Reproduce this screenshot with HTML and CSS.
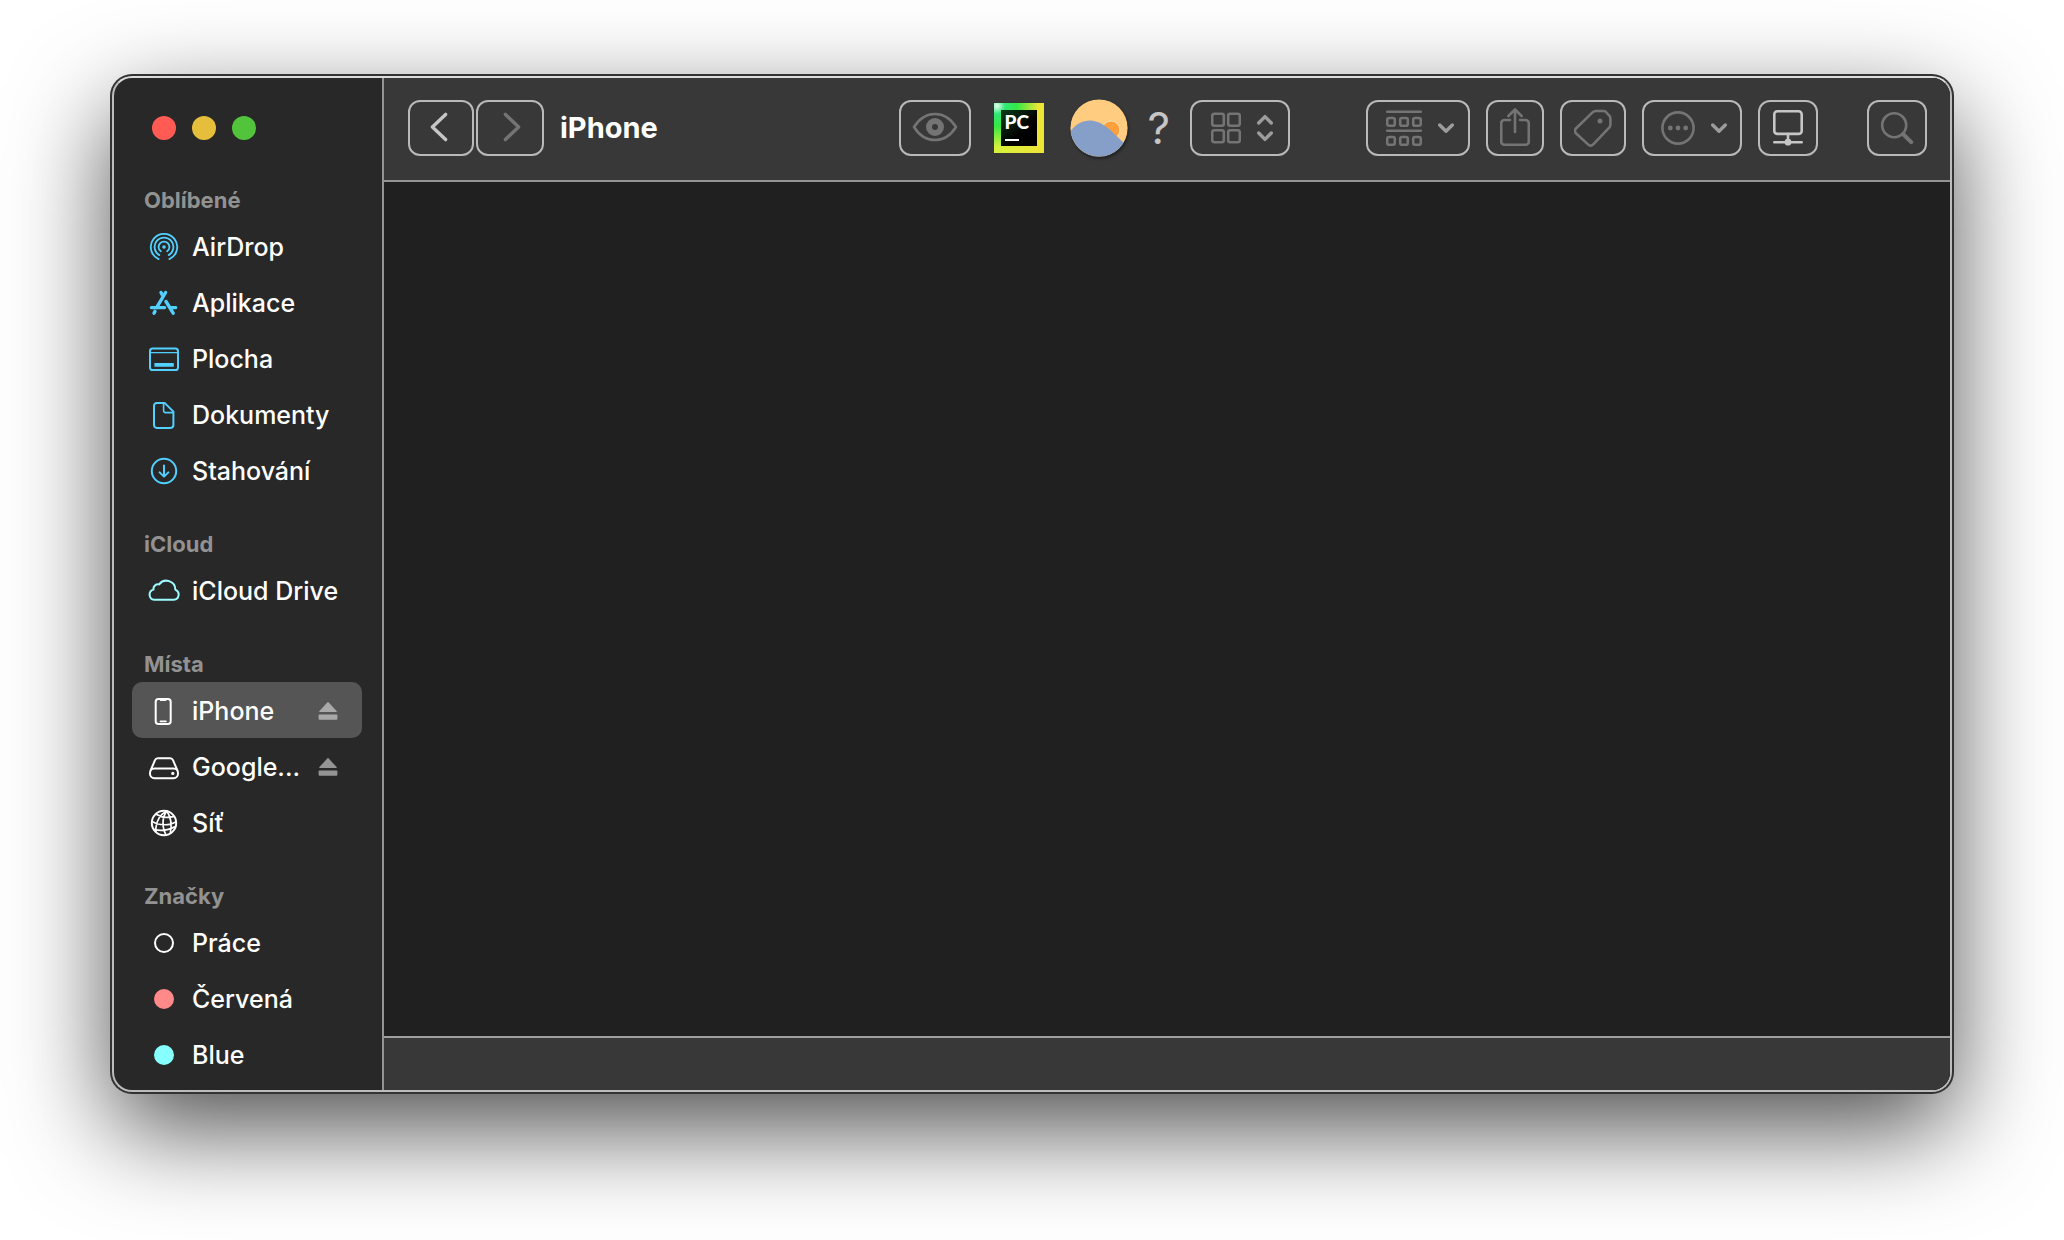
FILE: index.html
```html
<!DOCTYPE html>
<html lang="cs">
<head>
  <meta charset="UTF-8" />
  <meta name="viewport" content="width=device-width, initial-scale=1.0"/>
  <title>iPhone</title>
  <link rel="stylesheet" href="styles.css">
</head>
<body>
  <div class="window">
    <!-- SIDEBAR -->
    <aside class="sidebar">
      <div class="lights">
        <button class="light red" aria-label="Zavřít"></button>
        <button class="light yellow" aria-label="Minimalizovat"></button>
        <button class="light green" aria-label="Zvětšit"></button>
      </div>

      <nav>
        <h2>Oblíbené</h2>
        <a href="#" class="item">
          <svg class="icon blue" viewBox="0 0 32 32"><path stroke-width="1.8" d="M10.6 28.1a13.2 13.2 0 1 1 10.8 0M11.3 24.1a9.4 9.4 0 1 1 9.4 0M12.8 20.3a5.4 5.4 0 1 1 6.4 0"/><circle class="fill" cx="16" cy="16" r="1.8"/></svg>
          <span>AirDrop</span>
        </a>
        <a href="#" class="item">
          <svg class="icon blue apps-icon" viewBox="0 0 32 32"><path d="M17.6 5.5L8.6 20.6M7 24.4l-1 1.8M3.4 20.6h13.2M22.6 20.6h5.1"/><path d="M13 5.5l2 3.6M18 14.5l7.2 11.7"/></svg>
          <span>Aplikace</span>
        </a>
        <a href="#" class="item">
          <svg class="icon blue" viewBox="0 0 32 32"><rect x="2" y="5.6" width="28" height="21.4" rx="2.6"/><path stroke-width="1.4" d="M2 9.6h28"/><rect class="fill" x="6.4" y="20" width="19.4" height="3.8" rx="0.6"/></svg>
          <span>Plocha</span>
        </a>
        <a href="#" class="item">
          <svg class="icon blue" viewBox="0 0 32 32"><path d="M16.6 3.9H8.8a2.8 2.8 0 0 0-2.8 2.8v19.4a2.8 2.8 0 0 0 2.8 2.8h13.8a2.8 2.8 0 0 0 2.8-2.8V12.6z"/><path stroke-width="1.6" d="M15.6 4v7.6a2 2 0 0 0 2 2h7.6"/></svg>
          <span>Dokumenty</span>
        </a>
        <a href="#" class="item">
          <svg class="icon blue" viewBox="0 0 32 32"><circle cx="16" cy="16" r="12.2"/><path d="M16 10.4v11M11.6 17.4l4.4 4.2 4.4-4.2"/></svg>
          <span>Stahování</span>
        </a>

        <h2>iCloud</h2>
        <a href="#" class="item">
          <svg class="icon cyan" viewBox="0 0 32 32"><path d="M6.2 24.8h19.6a5.3 5.3 0 0 0 1.5-10.2A8.9 8.9 0 0 0 11.2 9.4a4.6 4.6 0 0 0-5.7 5.2A5.2 5.2 0 0 0 6.2 24.8z"/></svg>
          <span>iCloud Drive</span>
        </a>

        <h2>Místa</h2>
        <a href="#" class="item selected">
          <svg class="icon" viewBox="0 0 32 32"><rect x="7.7" y="4" width="15" height="25" rx="2.8"/><path d="M12.6 5.2h5.2M12.4 26.4h5.6" stroke-width="1.6"/></svg>
          <span>iPhone</span>
          <svg class="eject" viewBox="0 0 20 20"><path d="M10 .8l8.6 9.2a.6.6 0 0 1-.5 1H1.9a.6.6 0 0 1-.5-1z"/><rect x=".6" y="13.6" width="18.8" height="5.2" rx="1"/></svg>
        </a>
        <a href="#" class="item">
          <svg class="icon" viewBox="0 0 32 32"><path d="M2.6 19.4L7 9.2a3 3 0 0 1 2.8-1.9h12.4A3 3 0 0 1 25 9.2l4.4 10.2"/><rect x="2" y="17.6" width="28" height="9.6" rx="4.4"/><circle class="fill" cx="24.8" cy="22.4" r="1.6"/></svg>
          <span>Google...</span>
          <svg class="eject" viewBox="0 0 20 20"><path d="M10 .8l8.6 9.2a.6.6 0 0 1-.5 1H1.9a.6.6 0 0 1-.5-1z"/><rect x=".6" y="13.6" width="18.8" height="5.2" rx="1"/></svg>
        </a>
        <a href="#" class="item">
          <svg class="icon" viewBox="0 0 32 32"><circle cx="16" cy="16" r="12.2"/><path stroke-width="1.7" d="M19 4.2C12.6 6.6 7.6 14 7.8 24.6M19 4.2C14 9.6 13.8 20.4 18 27.8M19 4.2c3.8 5.8 5 13 3.4 21.4M8.2 7.2c5 3 12 4 17.8 2.2M4 14.4c6.6 4.2 17.6 4.6 24 .4M6 22.6c6.6 1.4 14.6.8 20.6-2.8"/></svg>
          <span>Síť</span>
        </a>

        <h2>Značky</h2>
        <a href="#" class="item">
          <i class="tag"></i>
          <span>Práce</span>
        </a>
        <a href="#" class="item">
          <i class="tag tag-red"></i>
          <span>Červená</span>
        </a>
        <a href="#" class="item">
          <i class="tag tag-blue"></i>
          <span>Blue</span>
        </a>
      </nav>
    </aside>

    <!-- MAIN -->
    <main class="main">
      <header class="toolbar">
        <div class="group history">
          <button class="tool back bright" aria-label="Zpět">
            <svg width="20" height="30" viewBox="0 0 20 30"><path d="M16.6 2.4L3.4 15l13.2 12.6"/></svg>
          </button>
          <button class="tool forward" aria-label="Vpřed">
            <svg width="20" height="30" viewBox="0 0 20 30"><path d="M3.4 2.4L16.6 15 3.4 27.6"/></svg>
          </button>
        </div>
        <h1>iPhone</h1>

        <div class="group apps">
          <button class="tool eye" aria-label="Rychlý náhled">
            <svg width="46" height="32" viewBox="0 0 46 32"><path d="M2 16C7 8 14.5 3 23 3s16 5 21 13c-5 8-12.5 13-21 13S7 24 2 16z"/><circle cx="23" cy="16" r="6" stroke-width="6"/></svg>
          </button>
          <button class="pycharm" aria-label="PyCharm"><span>PC</span></button>
          <button class="plain" aria-label="Pozadí">
            <svg class="picture" width="58" height="58" viewBox="0 0 58 58">
              <defs><clipPath id="disc"><circle cx="29" cy="29" r="28.6"/></clipPath></defs>
              <g clip-path="url(#disc)">
                <rect width="58" height="58" fill="#ffcc80"/>
                <circle cx="41" cy="31" r="9" fill="#ffa03c" stroke="#ffe0b2" stroke-width="1"/>
                <path d="M0 33C9 20 22 19 32 25s14 12 26 23v10H0z" fill="#869fc9"/>
              </g>
            </svg>
          </button>
          <button class="plain help">?</button>
          <button class="tool menu view" aria-label="Zobrazení">
            <svg width="30" height="32" viewBox="0 0 30 32"><rect x="1.2" y="1.8" width="11.6" height="12" rx="2"/><rect x="17.2" y="1.8" width="11.6" height="12" rx="2"/><rect x="1.2" y="18.2" width="11.6" height="12" rx="2"/><rect x="17.2" y="18.2" width="11.6" height="12" rx="2"/></svg>
            <svg class="chevron" width="16" height="28" viewBox="0 0 16 28"><path d="M1.7 9L8 2.6 14.3 9M1.7 19L8 25.4l6.3-6.4"/></svg>
          </button>
        </div>

        <div class="group actions">
          <button class="tool menu arrange" aria-label="Seskupit">
            <svg width="36" height="36" viewBox="0 0 36 36"><path d="M1.2 1.7h33.6M1.2 20.7h33.6"/><rect x="1.2" y="8" width="7.6" height="7.8" rx="1.8"/><rect x="14.2" y="8" width="7.6" height="7.8" rx="1.8"/><rect x="27.2" y="8" width="7.6" height="7.8" rx="1.8"/><rect x="1.2" y="27" width="7.6" height="7.8" rx="1.8"/><rect x="14.2" y="27" width="7.6" height="7.8" rx="1.8"/><rect x="27.2" y="27" width="7.6" height="7.8" rx="1.8"/></svg>
            <svg class="chevron" width="16" height="10" viewBox="0 0 16 10"><path d="M1.7 2L8 8.2 14.3 2"/></svg>
          </button>
          <button class="tool share" aria-label="Sdílet">
            <svg width="30" height="38" viewBox="0 0 30 38"><path d="M10 12H4.5A3.3 3.3 0 0 0 1.2 15.3v18.2a3.3 3.3 0 0 0 3.3 3.3h21a3.3 3.3 0 0 0 3.3-3.3V15.3A3.3 3.3 0 0 0 25.5 12H20M15 24V1.6M8.4 8L15 1.5 21.6 8"/></svg>
          </button>
          <button class="tool label" aria-label="Značky">
            <svg width="38" height="38" viewBox="0 0 38 38"><path d="M21.5 2h8.2a3 3 0 0 1 2.3 1l3.6 4.2a3 3 0 0 1 .8 2v6.6a4 4 0 0 1-1.2 2.8L19 35.6a3.3 3.3 0 0 1-4.7 0L1.9 24.2a3.3 3.3 0 0 1 0-4.7L18.8 3.1A4 4 0 0 1 21.5 2z"/><circle class="fill" cx="26" cy="12" r="2.5"/></svg>
          </button>
          <button class="tool menu more" aria-label="Akce">
            <svg width="34" height="34" viewBox="0 0 34 34"><circle cx="17" cy="17" r="15.6"/><g class="fill"><circle cx="9.3" cy="17" r="2.4"/><circle cx="17" cy="17" r="2.4"/><circle cx="24.7" cy="17" r="2.4"/></g></svg>
            <svg class="chevron" width="16" height="10" viewBox="0 0 16 10"><path d="M1.7 2L8 8.2 14.3 2"/></svg>
          </button>
          <button class="tool server bright" aria-label="Připojit k serveru">
            <svg width="30" height="36" viewBox="0 0 30 36"><rect x="1.3" y="1.3" width="27.4" height="22.6" rx="3"/><path d="M15 24v8M1.3 32.2h27.4"/><circle class="fill" cx="15" cy="32.2" r="3.4"/></svg>
          </button>
        </div>

        <button class="tool search" aria-label="Hledat">
          <svg width="34" height="34" viewBox="0 0 34 34"><circle cx="14.2" cy="14.2" r="12"/><path class="handle" d="M23 23l8.2 8.2"/></svg>
        </button>
      </header>
      <section class="content"></section>
      <footer class="statusbar"></footer>
    </main>
  </div>
</body>
</html>
```
FILE: styles.css
```css
* {
  box-sizing: border-box;
}
body {
  font-family: Inter, "Liberation Sans", sans-serif;
  background-color: #ffffff;
  margin: 0;
  padding: 76px 112px 148px;
  min-height: 100vh;
  display: flex;
  color: #ffffff;
}
button {
  font-family: inherit;
  background: none;
  border: none;
  padding: 0;
  cursor: pointer;
}
svg {
  display: block;
  flex: none;
  fill: none;
  stroke: currentColor;
  stroke-width: 2;
  stroke-linecap: round;
  stroke-linejoin: round;
}
.fill {
  fill: currentColor;
  stroke: none;
}

.window {
  flex: 1;
  display: flex;
  overflow: hidden;
  border: 2px solid #bcbcbc;
  border-top-color: #dcdcdc;
  border-radius: 20px;
  background-color: #282828;
  box-shadow: 0 0 0 2px #333333, 0 36px 100px rgba(0,0,0,0.7);
}

/* sidebar */
.sidebar {
  flex: none;
  width: 270px;
  padding: 38px 20px 0 18px;
  border-right: 2px solid #949494;
}
.lights {
  display: flex;
  gap: 16px;
  padding: 0 20px 40px;
}
.light {
  width: 24px;
  height: 24px;
  border-radius: 50%;
}
.red    { background-color: #ff5b54; }
.yellow { background-color: #e5bf3c; }
.green  { background-color: #51c43b; }

h2 {
  margin: 26px 0 0;
  padding: 2px 0 0 12px;
  font-size: 22px;
  font-weight: 700;
  line-height: 36px;
  color: #929292;
}
h2:first-child {
  margin-top: 0;
}
.item {
  display: flex;
  align-items: center;
  gap: 12px;
  height: 56px;
  padding: 2px 24px 0 16px;
  border-radius: 10px;
  font-size: 25px;
  font-weight: 500;
  color: #ffffff;
  text-decoration: none;
}
.item span {
  flex: 1;
  white-space: nowrap;
}
.selected {
  background-color: #555555;
}
.icon {
  width: 32px;
  height: 32px;
}
.apps-icon {
  stroke-width: 3.4;
}
.blue { color: #52d0ff; }
.cyan { color: #9cfcff; }
.eject {
  width: 20px;
  height: 20px;
  fill: #949494;
  stroke: none;
}
.selected .eject {
  fill: #a9a9a9;
}
.tag {
  width: 20px;
  height: 20px;
  margin: 0 6px;
  border: 2px solid #ffffff;
  border-radius: 50%;
}
.tag-red {
  background-color: #ff8a89;
  border-color: #ff8a89;
}
.tag-blue {
  background-color: #88ffff;
  border-color: #88ffff;
}

/* main */
.main {
  flex: 1;
  display: flex;
  flex-direction: column;
  background-color: #202020;
}
.toolbar {
  display: flex;
  align-items: center;
  padding: 21px 23px 23px 24px;
  background-color: #383838;
  border-bottom: 2px solid #949494;
}
h1 {
  flex: 1;
  margin: 0 0 0 16px;
  font-size: 29px;
  font-weight: 700;
  line-height: 56px;
}
.group {
  display: flex;
  align-items: center;
}
.history {
  gap: 2px;
}
.actions {
  gap: 16px;
  margin-left: 76px;
}
.tool {
  display: flex;
  align-items: center;
  justify-content: center;
  width: 60px;
  height: 56px;
  border: 2px solid #b9b9b9;
  border-radius: 12px;
  color: #747474;
}
.tool svg {
  stroke-width: 2.6;
}
.bright {
  color: #c6c6c6;
}
.back, .label {
  width: 66px;
}
.back {
  padding-right: 4px;
}
.forward {
  width: 68px;
  padding-left: 4px;
}
.eye {
  width: 72px;
}
.share {
  width: 58px;
}
.menu {
  width: 100px;
  gap: 16px;
  padding-left: 4px;
}
.arrange {
  width: 104px;
}
.tool .chevron, .history svg {
  stroke-width: 3.4;
}
.chevron {
  color: #9c9c9c;
}
.search {
  margin-left: 49px;
}
.handle {
  stroke-width: 4;
}
.share svg, .eye svg, .history svg {
  margin-bottom: 2px;
}
.pycharm {
  width: 50px;
  height: 50px;
  margin: 0 26px 0 23px;
  padding: 7px;
  background:
    radial-gradient(circle at 6% 6%, #e8fff0 0, #30e878 12%, rgba(10,230,70,0.8) 30%, rgba(10,230,70,0) 62%),
    linear-gradient(90deg, #d5f23c, #efe436);
}
.pycharm span {
  display: block;
  height: 36px;
  padding: 3px 0 0 4px;
  background: linear-gradient(135deg, #0b3d16, #000000 60%);
  font-family: Lato, sans-serif;
  font-size: 19px;
  font-weight: 900;
  line-height: 18px;
  text-align: left;
  color: #ffffff;
}
.pycharm span::after {
  content: "";
  display: block;
  width: 14px;
  height: 2px;
  margin-top: 8px;
  background-color: #ffffff;
}
.picture {
  stroke: none;
  border-radius: 50%;
  box-shadow: 1px 2px 3px rgba(0,0,0,0.4);
}
.help {
  padding: 0 20px 0 20px;
  font-size: 44px;
  font-weight: 400;
  line-height: 56px;
  color: #c6c6c6;
}
.content {
  flex: 1;
}
.statusbar {
  height: 54px;
  background-color: #383838;
  border-top: 2px solid #a0a0a0;
}
```
